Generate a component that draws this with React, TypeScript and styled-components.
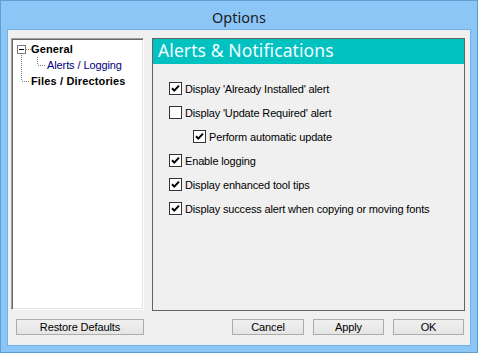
import React from "react";
import styled, { createGlobalStyle } from "styled-components";

const GlobalStyle = createGlobalStyle`
  html, body { margin: 0; padding: 0; background: #8bc6f7; }
  * { box-sizing: border-box; }
`;

const Window = styled.div`
  width: 478px;
  height: 353px;
  background: #8bc6f7;
  border: 1px solid #5f9fd8;
  display: flex;
  flex-direction: column;
  overflow: hidden;
`;

const TitleBar = styled.div`
  height: 28px;
  display: flex;
  align-items: center;
  justify-content: center;
  font-family: "Noto Sans", "Open Sans", sans-serif;
  font-size: 14.5px;
  color: #1c1c1c;
  padding-top: 3px;
`;

const Client = styled.div`
  margin: 0 6px 0 6px;
  height: 317px;
  border: 1px solid #76aee6;
  background: #f0f0f0;
  display: flex;
  flex-direction: column;
  padding: 8px 5px 0 3px;
  font-family: "Liberation Sans", Arial, sans-serif;
  font-size: 11px;
  letter-spacing: -0.15px;
  color: #000;
`;

const MainRow = styled.div`
  display: flex;
  gap: 8px;
  height: 273px;
`;

const Tree = styled.div`
  width: 133px;
  height: 272px;
  background: #fff;
  border-style: solid;
  border-width: 1px;
  border-color: #a0a0a0 #ffffff #ffffff #a0a0a0;
  box-shadow: inset 1px 1px 0 #696969, inset -1px -1px 0 #e3e3e3;
  padding: 2px 1px;
  display: flex;
  flex-direction: column;
`;

const TreeRow = styled.div`
  height: 16px;
  display: flex;
  align-items: center;
`;

const TreeLabel = styled.span<{ $bold?: boolean; $selected?: boolean }>`
  font-weight: ${(p) => (p.$bold ? 700 : 400)};
  color: ${(p) => (p.$selected ? "#00007a" : "#000")};
  letter-spacing: ${(p) => (p.$bold ? "0.15px" : "-0.1px")};
  white-space: nowrap;
  line-height: 16px;
`;

const Panel = styled.div`
  width: 313px;
  height: 273px;
  border: 1px solid #646464;
  display: flex;
  flex-direction: column;
`;

const PanelHeader = styled.div`
  height: 25px;
  background: #02c1c1;
  color: #f2ffff;
  font-family: "Noto Sans", "Open Sans", sans-serif;
  font-size: 17.5px;
  letter-spacing: 0.1px;
  line-height: 25px;
  padding-left: 5px;
  padding-bottom: 2px;
  display: flex;
  align-items: center;
`;

const OptionList = styled.div`
  display: flex;
  flex-direction: column;
  gap: 11px;
  padding: 18px 0 0 16px;
`;

const OptionRow = styled.label<{ $indent?: number }>`
  display: flex;
  align-items: center;
  height: 13px;
  gap: 3px;
  padding-left: ${(p) => p.$indent ?? 0}px;
  white-space: nowrap;
`;

const Box = styled.span`
  width: 13px;
  height: 13px;
  border: 1px solid #333;
  background: #fff;
  display: inline-flex;
  align-items: center;
  justify-content: center;
  flex: none;
`;

const ButtonRow = styled.div`
  display: flex;
  align-items: center;
  margin-top: 8px;
  padding-left: 5px;
  padding-right: 1px;
`;

const Button = styled.button<{ $w: number }>`
  width: ${(p) => p.$w}px;
  height: 16px;
  border: 1px solid #acacac;
  background: linear-gradient(#f0f0f0, #e5e5e5);
  font-family: "Liberation Sans", Arial, sans-serif;
  font-size: 11px;
  letter-spacing: -0.1px;
  color: #000;
  padding: 0;
  line-height: 14px;
`;

const Spacer = styled.div`
  flex: 1;
`;

const ButtonGroup = styled.div`
  display: flex;
  gap: 9px;
`;

const Check = ({ on }: { on: boolean }) => (
  <Box>
    {on && (
      <svg width="11" height="11" viewBox="0 0 11 11">
        <path d="M2 5.2 L4.3 7.6 L9 2.6" stroke="#000" strokeWidth="2" fill="none" />
      </svg>
    )}
  </Box>
);

const dot = { stroke: "#808080", strokeWidth: 1, strokeDasharray: "1 1" };

const options: { label: string; on: boolean; indent?: number }[] = [
  { label: "Display 'Already Installed' alert", on: true },
  { label: "Display 'Update Required' alert", on: false },
  { label: "Perform automatic update", on: true, indent: 24 },
  { label: "Enable logging", on: true },
  { label: "Display enhanced tool tips", on: true },
  { label: "Display success alert when copying or moving fonts", on: true },
];

export default function App() {
  return (
    <>
      <GlobalStyle />
      <Window>
        <TitleBar>Options</TitleBar>
        <Client>
          <MainRow>
            <Tree>
              <TreeRow>
                <svg width="18" height="16" viewBox="0 0 18 16">
                  <rect x="4.5" y="4.5" width="8" height="8" fill="#fff" stroke="#7a7a7a" />
                  <line x1="6" y1="8.5" x2="11" y2="8.5" stroke="#000" />
                  <line x1="13" y1="8.5" x2="18" y2="8.5" {...dot} />
                  <line x1="8.5" y1="14" x2="8.5" y2="16" {...dot} />
                </svg>
                <TreeLabel $bold>General</TreeLabel>
              </TreeRow>
              <TreeRow>
                <svg width="34" height="16" viewBox="0 0 34 16">
                  <line x1="8.5" y1="0" x2="8.5" y2="16" {...dot} />
                  <line x1="24.5" y1="0" x2="24.5" y2="8" {...dot} />
                  <line x1="25" y1="8.5" x2="33" y2="8.5" {...dot} />
                </svg>
                <TreeLabel $selected>Alerts / Logging</TreeLabel>
              </TreeRow>
              <TreeRow>
                <svg width="18" height="16" viewBox="0 0 18 16">
                  <line x1="8.5" y1="0" x2="8.5" y2="8" {...dot} />
                  <line x1="9" y1="8.5" x2="17" y2="8.5" {...dot} />
                </svg>
                <TreeLabel $bold>Files / Directories</TreeLabel>
              </TreeRow>
            </Tree>
            <Panel>
              <PanelHeader>Alerts &amp; Notifications</PanelHeader>
              <OptionList>
                {options.map((o) => (
                  <OptionRow key={o.label} $indent={o.indent}>
                    <Check on={o.on} />
                    <span>{o.label}</span>
                  </OptionRow>
                ))}
              </OptionList>
            </Panel>
          </MainRow>
          <ButtonRow>
            <Button $w={128}>Restore Defaults</Button>
            <Spacer />
            <ButtonGroup>
              <Button $w={72}>Cancel</Button>
              <Button $w={71}>Apply</Button>
              <Button $w={71}>OK</Button>
            </ButtonGroup>
          </ButtonRow>
        </Client>
      </Window>
    </>
  );
}
